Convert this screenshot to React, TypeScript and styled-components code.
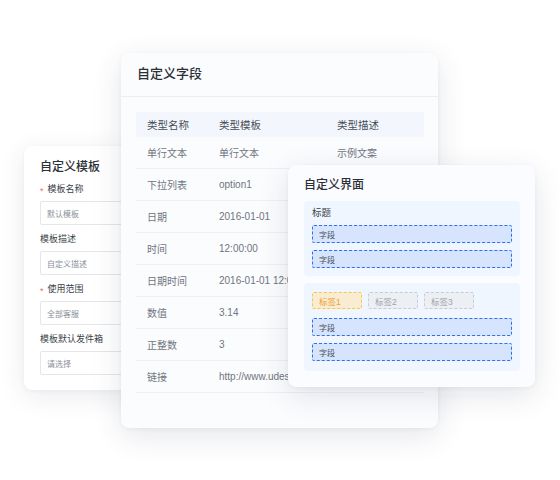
import styled, { createGlobalStyle } from 'styled-components';

const GlobalStyle = createGlobalStyle`
  html, body {
    margin: 0;
    padding: 0;
    background: #ffffff;
  }
  body {
    font-family: "Liberation Sans", "Noto Sans CJK SC", sans-serif;
    -webkit-font-smoothing: antialiased;
  }
  * {
    box-sizing: border-box;
  }
`;

const templateFields = [
  { label: '模板名称', value: '默认模板', required: true },
  { label: '模板描述', value: '自定义描述', required: false },
  { label: '使用范围', value: '全部客服', required: true },
  { label: '模板默认发件箱', value: '请选择', required: false },
];

// third column is covered by the layout card below row 1
const fieldRows = [
  ['单行文本', '单行文本', '示例文案'],
  ['下拉列表', 'option1', ''],
  ['日期', '2016-01-01', ''],
  ['时间', '12:00:00', ''],
  ['日期时间', '2016-01-01 12:00:00', ''],
  ['数值', '3.14', ''],
  ['正整数', '3', ''],
  ['链接', 'http://www.udesk.cn', ''],
];

const tags = [
  { text: '标签1', active: true },
  { text: '标签2', active: false },
  { text: '标签3', active: false },
];

const App = () => {
  return (
    <>
      <GlobalStyle />
      <Canvas>
        <TemplateCard>
          <CardTitle>自定义模板</CardTitle>
          {templateFields.map((f) => (
            <FieldGroup key={f.label}>
              <Label>
                {f.required && <Star>*</Star>}
                {f.label}
              </Label>
              <Input>{f.value}</Input>
            </FieldGroup>
          ))}
        </TemplateCard>

        <FieldCard>
          <FieldHeader>
            <CardTitle $size={13}>自定义字段</CardTitle>
          </FieldHeader>
          <TableWrap>
            <HeadRow>
              <HeadCell>类型名称</HeadCell>
              <HeadCell>类型模板</HeadCell>
              <HeadCell>类型描述</HeadCell>
            </HeadRow>
            {fieldRows.map((row) => (
              <Row key={row[0]}>
                {row.map((cell, i) => (
                  <Cell key={i}>{cell}</Cell>
                ))}
              </Row>
            ))}
          </TableWrap>
        </FieldCard>

        <LayoutCard>
          <CardTitle>自定义界面</CardTitle>
          <Section $padBottom={8}>
            <SectionTitle>标题</SectionTitle>
            <DashedField>字段</DashedField>
            <DashedField>字段</DashedField>
          </Section>
          <Section $padTop={9} $padBottom={10}>
            <TagRow>
              {tags.map((t) => (
                <Tag key={t.text} $active={t.active}>
                  {t.text}
                </Tag>
              ))}
            </TagRow>
            <DashedField>字段</DashedField>
            <DashedField>字段</DashedField>
          </Section>
        </LayoutCard>
      </Canvas>
    </>
  );
};

export default App;

const Canvas = styled.div`
  position: relative;
  width: 560px;
  height: 480px;
  background: #ffffff;
  overflow: hidden;
`;

const Card = styled.div`
  position: absolute;
  border-radius: 8px;
  background: #fbfcfe;
  box-shadow: 0 6px 26px rgba(40, 50, 80, 0.1), 0 1px 4px rgba(40, 50, 80, 0.04);
`;

const TemplateCard = styled(Card)`
  left: 24px;
  top: 146px;
  width: 180px;
  height: 244px;
  padding: 13px 0 0 16px;
  display: flex;
  flex-direction: column;
  gap: 7px;
  background: #ffffff;
`;

const CardTitle = styled.div<{ $size?: number }>`
  font-size: ${(p) => p.$size ?? 12}px;
  line-height: 16px;
  color: #2b2f36;
  font-weight: 500;
`;

const FieldGroup = styled.div`
  display: flex;
  flex-direction: column;
  gap: 5px;
`;

const Label = styled.div`
  height: 14px;
  font-size: 9px;
  line-height: 14px;
  color: #3a3f47;
  display: flex;
  align-items: center;
`;

const Star = styled.span`
  color: #f56c5a;
  font-size: 9px;
  line-height: 9px;
  margin-right: 4px;
  transform: translateY(2px);
`;

const Input = styled.div`
  height: 24px;
  width: 160px;
  border: 1px solid #e3e6eb;
  border-radius: 2px;
  background: #ffffff;
  padding-left: 6px;
  display: flex;
  align-items: center;
  font-size: 8px;
  color: #8a8f98;
`;

const FieldCard = styled(Card)`
  left: 121px;
  top: 53px;
  width: 317px;
  height: 375px;
  box-shadow: 0 8px 30px rgba(40, 50, 80, 0.12), 0 1px 4px rgba(40, 50, 80, 0.05);
`;

const FieldHeader = styled.div`
  height: 44px;
  padding: 13px 16px 0;
  border-bottom: 1px solid #eceef2;
`;

const TableWrap = styled.div`
  padding: 15px 14px 0 15px;
`;

const HeadRow = styled.div`
  display: grid;
  grid-template-columns: 72px 118px 98px;
  height: 25px;
  background: #f3f7fd;
  align-items: center;
`;

const HeadCell = styled.div`
  padding-left: 11px;
  font-size: 10.5px;
  color: #474c55;
  white-space: nowrap;
`;

const Row = styled.div`
  display: grid;
  grid-template-columns: 72px 118px 98px;
  height: 32px;
  align-items: center;
  border-bottom: 1px solid #eef0f3;
`;

const Cell = styled.div`
  padding-left: 11px;
  font-size: 10px;
  color: #70757e;
  white-space: nowrap;
  overflow: hidden;
`;

const LayoutCard = styled(Card)`
  left: 288px;
  top: 165px;
  width: 247px;
  height: 222px;
  padding: 12px 15px 0 16px;
  display: flex;
  flex-direction: column;
  gap: 8px;
  background: #fbfcff;
  box-shadow: 0 8px 30px rgba(40, 50, 80, 0.13), 0 1px 4px rgba(40, 50, 80, 0.05);
`;

const Section = styled.div<{ $padTop?: number; $padBottom?: number }>`
  background: #eff6ff;
  border-radius: 4px;
  padding: ${(p) => p.$padTop ?? 6}px 8px ${(p) => p.$padBottom ?? 8}px;
  display: flex;
  flex-direction: column;
  gap: 7px;
  & + & {
    margin-top: -1px;
  }
`;

const SectionTitle = styled.div`
  font-size: 9.5px;
  line-height: 12px;
  color: #3a3f47;
  margin-bottom: -1px;
`;

const DashedField = styled.div`
  height: 18px;
  border: 1px dashed #2f6ff2;
  border-radius: 2px;
  background: #d6e4fd;
  padding-left: 6px;
  display: flex;
  align-items: center;
  font-size: 8px;
  color: #4d525b;
`;

const TagRow = styled.div`
  display: flex;
  gap: 6px;
  margin-bottom: 2px;
`;

const Tag = styled.div<{ $active: boolean }>`
  width: 50px;
  height: 17px;
  border: 1px dashed ${(p) => (p.$active ? '#f7c84a' : '#c9ccd1')};
  background: ${(p) => (p.$active ? '#f8ecd2' : '#eceff3')};
  color: ${(p) => (p.$active ? '#f0a030' : '#a0a4aa')};
  border-radius: 2px;
  padding-left: 6px;
  display: flex;
  align-items: center;
  font-size: 8.5px;
`;
